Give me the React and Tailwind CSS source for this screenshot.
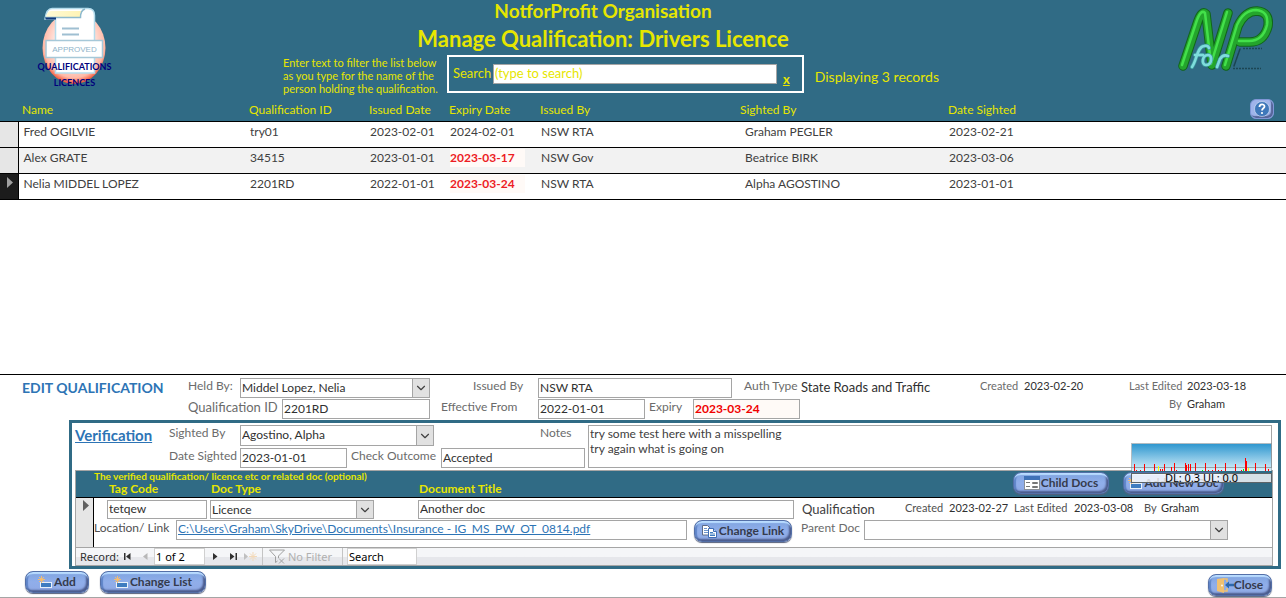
import { useState } from 'react'
import clsx from 'clsx'
import { ChevronDown } from 'lucide-react'

const records = [
  { id: 1, name: 'Fred OGILVIE', qualId: 'try01', issued: '2023-02-01', expiry: '2024-02-01', expired: false, issuedBy: 'NSW RTA', sightedBy: 'Graham PEGLER', sighted: '2023-02-21' },
  { id: 2, name: 'Alex GRATE', qualId: '34515', issued: '2023-01-01', expiry: '2023-03-17', expired: true, issuedBy: 'NSW Gov', sightedBy: 'Beatrice BIRK', sighted: '2023-03-06' },
  { id: 3, name: 'Nelia MIDDEL LOPEZ', qualId: '2201RD', issued: '2022-01-01', expiry: '2023-03-24', expired: true, issuedBy: 'NSW RTA', sightedBy: 'Alpha AGOSTINO', sighted: '2023-01-01' },
]

// x, height, colour of each traffic spike
const spikes = [
  [3, 7, 'red'], [5, 1, 'red'], [9, 1, 'red'], [13, 7, 'red'], [23, 7, 'red'], [27, 5, 'yellow'], [29, 2, 'red'], [31, 2, 'red'],
  [33, 7, 'red'], [40, 4, 'red'], [43, 8, 'red'], [45, 1, 'red'], [54, 8, 'red'], [55, 6, 'red'], [57, 7, 'red'], [59, 7, 'red'],
  [64, 8, 'red'], [71, 1, 'lime'], [74, 8, 'red'], [77, 1, 'red'], [81, 1, 'red'], [84, 7, 'red'], [87, 1, 'red'], [90, 1, 'red'],
  [94, 8, 'red'], [104, 7, 'red'], [110, 1, 'red'], [112, 2, 'lime'], [114, 13, 'red'], [115, 10, 'red'], [117, 3, 'yellow'],
  [124, 8, 'red'], [134, 7, 'red'], [137, 2, 'red'],
]

const inputClass = 'h-5 min-w-0 border border-[#a5a5a5] bg-white px-px pb-[2px] text-[#303030] outline-none'

function Field({ id, label, labelClass, className, value, type = 'text' }) {
  return (
    <>
      <label htmlFor={id} className={clsx('shrink-0 leading-4 whitespace-nowrap text-[#6b6b6b]', labelClass)}>{label}</label>
      <input id={id} type={type} defaultValue={value} className={clsx(inputClass, className)} />
    </>
  )
}

function Combo({ id, value, className, label }) {
  return (
    <div className={clsx('relative min-w-0', className)}>
      <select
        id={id}
        aria-label={label}
        defaultValue={value}
        className="block h-full w-full appearance-none border border-[#a5a5a5] bg-white pr-5 pb-[2px] pl-px text-[#303030] outline-none"
      >
        <option value={value}>{value}</option>
      </select>
      <span className="pointer-events-none absolute inset-y-0 right-0 flex w-[18px] items-center justify-center border border-[#a5a5a5] bg-[#e1e1e1]">
        <ChevronDown size={14} strokeWidth={2} className="shrink-0 text-[#404040]" />
      </span>
    </div>
  )
}

function GlossyButton({ children, className }) {
  return (
    <button
      type="button"
      className={clsx(
        'flex h-[22px] shrink-0 items-center justify-center rounded-lg border border-[#5470a8] bg-linear-to-b from-[#7fa4e0] via-[#90aeea] to-[#8fa9e4] font-bold whitespace-nowrap text-[#353b4d] shadow-[inset_0_3px_1px_-1px_#b9dcff,inset_-2px_-2px_2px_#4a5a8c,inset_2px_0_1px_#5f84c8,0_1px_1px_#56607c]',
        className
      )}
    >
      {children}
    </button>
  )
}

function NewIcon() {
  return (
    <svg width="14" height="13" viewBox="0 0 14 13" className="shrink-0">
      <rect x="2.500" y="6.500" width="11" height="5" fill="#3f7cc0" stroke="#e8f0fa" />
      <path d="M3.500 0v7M0 3.500h7M1 1l5 5M6 1L1 6" stroke="#f2bc72" strokeWidth="1" />
    </svg>
  )
}

function FormIcon() {
  return (
    <svg width="16" height="14" viewBox="0 0 16 14" className="shrink-0">
      <rect x="0.5" y="0.5" width="15" height="13" fill="#fff" stroke="#8a8f98" />
      <path d="M0 0h16v4H0z" fill="#3f72b8" />
      <path d="M2 6.500h4M2 10.500h4" stroke="#777" />
      <path d="M8.500 6.500h5v1h-5zM8.500 10.500h5v1h-5z" fill="none" stroke="#777" />
    </svg>
  )
}

function CopyIcon() {
  return (
    <svg width="15" height="13" viewBox="0 0 15 13" className="shrink-0">
      <path d="M0.500 0.500h5l3 3v6.500h-8z" fill="#fff" stroke="#5c6b88" />
      <path d="M2 3.500h3M2 5.500h5M2 7.500h5" stroke="#6f95cc" />
      <path d="M6.500 3.500h5l3 3v6h-8z" fill="#fff" stroke="#3f6db4" />
      <path d="M11.500 3.500v3h3" fill="#bcd2f0" stroke="#3f6db4" />
      <path d="M8 7.500h3M8 9h5M8 10.500h5" stroke="#3f7cc0" />
    </svg>
  )
}

function DoorIcon() {
  return (
    <svg width="17" height="15" viewBox="0 0 17 15" className="shrink-0">
      <path d="M0 1l7-1v15l-7-2z" fill="#f0c070" />
      <path d="M7 1h3v3M10 10v3H7" fill="none" stroke="#f0c070" strokeWidth="1.500" />
      <circle cx="5" cy="7.500" r="0.900" fill="#fff" />
      <path d="M8 7l4-3.500v2.300h5v2.400h-5v2.300z" fill="#2d68ad" />
    </svg>
  )
}

function ApprovedLogo() {
  return (
    <svg width="78" height="84" viewBox="35 5 78 84" role="img" aria-label="Qualifications Licences">
      <defs>
        <radialGradient id="disc" cx="50%" cy="42%" r="58%">
          <stop offset="0.500" stopColor="#ffe9e4" />
          <stop offset="0.850" stopColor="#ffb9a6" />
          <stop offset="1" stopColor="#f04a2c" />
        </radialGradient>
        <linearGradient id="roll" x1="0" x2="1">
          <stop offset="0" stopColor="#fffbd6" />
          <stop offset="1" stopColor="#fff3b4" />
        </linearGradient>
      </defs>
      <ellipse cx="74" cy="48" rx="31.500" ry="36" fill="url(#disc)" />
      <path d="M45 19c1-7 3-10.500 7-10.500h36c5 0 6.500 3 6.500 7V73H55.500V19z" fill="#fff" stroke="#b4dcec" strokeWidth="1.500" />
      <path d="M46 17c1-5 3-6 6-6h30c-2 1-2 4-2 6z" fill="url(#roll)" />
      <path d="M45 17.500h35.500c0-4 1-7.500 4.500-8.500" fill="none" stroke="#8db9cc" strokeWidth="1.500" />
      <path d="M45 17.500h11v2H46z" fill="#123a7c" />
      <path d="M62 28.500h17M62 34.500h17" stroke="#9fbfd2" strokeWidth="1.800" />
      <rect x="46" y="40.500" width="56.500" height="17" fill="#fff" stroke="#a6c8d8" strokeWidth="1.500" />
      <text x="74.500" y="52" textAnchor="middle" fontFamily="Liberation Sans, sans-serif" fontSize="8" fill="#8fb4ca">APPROVED</text>
      <text x="74.500" y="70" textAnchor="middle" fontFamily="Lato, sans-serif" fontWeight="bold" fontSize="9" fill="#00007c">QUALIFICATIONS</text>
      <text x="74.500" y="86" textAnchor="middle" fontFamily="Lato, sans-serif" fontWeight="bold" fontSize="9" fill="#00007c">LICENCES</text>
    </svg>
  )
}

// Tube lettering: dark outline, mid tone, thin highlight on top
function NfpLogo() {
  const letters = 'M1183 66L1198 21Q1202 10 1206 14L1212 65L1228 13M1226 66L1238 26Q1245 11 1257 11Q1270 12 1268 26Q1264 42 1250 42L1240 42'
  const word = 'M1192 67C1197 60 1197 47 1204 46Q1208 45 1209 48M1195 55H1203M1208 55C1202 55 1201 65 1206 65C1212 65 1213 55 1208 55M1217 67L1220 59Q1223 54 1228 56'
  return (
    <svg width="98" height="68" viewBox="1177 4 98 68" role="img" aria-label="NforP" fill="none" strokeLinecap="round" strokeLinejoin="round">
      <path d={letters} stroke="#11651a" strokeWidth="9.500" />
      <path d={letters} stroke="#24a52c" strokeWidth="7.500" />
      <path d={letters} stroke="#43e04a" strokeWidth="2.500" transform="translate(-1 -1)" />
      <path d="M1240 49L1234 66" stroke="#1b4450" strokeWidth="1.500" strokeDasharray="3 1" />
      <path d="M1243 48.500H1262M1233 68.500H1261" stroke="#1c4654" strokeWidth="1.500" strokeDasharray="2 1" strokeLinecap="butt" />
      <path d={word} stroke="#3b9a9c" strokeWidth="4" />
      <path d={word} stroke="#7fdcdc" strokeWidth="2.600" />
    </svg>
  )
}

function TrafficMeter() {
  return (
    <div className="absolute top-[20px] right-[6px] w-[141px]">
      <div className="border border-b-0 border-[#7d8f99]/60">
        <svg width="139" height="27" viewBox="1 0 139 27" className="block">
          <defs>
            <linearGradient id="sky" x1="0" y1="0" x2="0" y2="1">
              <stop offset="0" stopColor="#2f97cf" />
              <stop offset="1" stopColor="#d8f1fb" />
            </linearGradient>
          </defs>
          <rect width="141" height="27" fill="url(#sky)" />
          <path d="M0 23.500H141" stroke="#9aa5aa" />
          {spikes.map(([x, h, color]) => (
            <rect key={x} x={x} y={27 - h} width="1" height={h} fill={color} />
          ))}
        </svg>
      </div>
      <div className="mt-[2px] h-[10px] border border-[#5c6468] bg-white/80 text-center font-['Noto_Sans'] text-[11px] leading-[8px] text-black">
        DL: 0.3 UL: 0.0
      </div>
    </div>
  )
}

function PageHeader() {
  const [search, setSearch] = useState('')
  return (
    <header className="flex h-[97px] items-start bg-[#306b85] text-[#e6e600]">
      <div className="w-[283px] shrink-0 pt-[5px] pl-[35px]">
        <ApprovedLogo />
      </div>
      <div className="w-[656px] shrink-0">
        <div className="pr-4 text-center font-bold">
          <p className="text-[19px] leading-[21px]">NotforProfit Organisation</p>
          <h1 className="pt-1 text-[22px] leading-[28px]">Manage Qualification: Drivers Licence</h1>
        </div>
        <div className="flex pt-px text-[13px]">
          <p className="w-[164px] pt-[2px] text-[11px] leading-[13px] whitespace-nowrap">
            Enter text to filter the list below<br />
            as you type for the name of the<br />
            person holding the qualification.
          </p>
          <div className="mt-px flex h-[38px] w-[357px] items-start border-2 border-white pt-[7px] pl-1">
            <label htmlFor="search" className="w-10 pt-px leading-4">Search</label>
            <input
              id="search"
              type="text"
              placeholder="(type to search)"
              value={search}
              onChange={(e) => setSearch(e.target.value)}
              className="h-5 w-[284px] border border-[#a5a5a5] bg-white px-px pb-[2px] text-[#303030] outline-none placeholder:text-[#e6e600]"
            />
            <button type="button" aria-label="x" onClick={() => setSearch('')} className="mt-[7px] ml-[6px] leading-4 font-bold underline">x</button>
          </div>
          <p className="pt-[15px] pl-[11px] text-[14px] leading-4 whitespace-nowrap">Displaying 3 records</p>
        </div>
      </div>
      <div className="ml-auto pt-1 pr-[11px]">
        <NfpLogo />
      </div>
    </header>
  )
}

function RecordsTable() {
  return (
    <table className="w-full table-fixed border-collapse text-left">
      <colgroup>
        <col className="w-[18px]" />
        <col className="w-[227px]" />
        <col className="w-[120px]" />
        <col className="w-[80px]" />
        <col className="w-[91px]" />
        <col className="w-[204px]" />
        <col className="w-[204px]" />
        <col />
      </colgroup>
      <thead className="bg-[#306b85] text-[#e6e600]">
        <tr className="h-6 whitespace-nowrap [&>th]:p-0 [&>th]:pt-[2px] [&>th]:pl-1 [&>th]:font-normal">
          <th></th>
          <th>Name</th>
          <th>Qualification ID</th>
          <th>Issued Date</th>
          <th>Expiry Date</th>
          <th>Issued By</th>
          <th className="pl-0!">Sighted By</th>
          <th className="pt-0!">
            <div className="flex items-center justify-between pr-3">
              <span className="pt-[2px]">Date Sighted</span>
              <button type="button" aria-label="Help" className="flex h-5 w-6 items-center justify-center rounded-md border border-[#7f96d6] bg-[#9fb4ea] shadow-[inset_-2px_-2px_1px_#56659a]">
                <svg width="16" height="16" viewBox="0 0 16 16">
                  <circle cx="8" cy="8" r="7.500" fill="#3f78ba" stroke="#dfe9f8" strokeWidth="0.600" />
                  <path d="M5.500 6c0-3.500 5-3.300 5-.6C10.500 7.200 8 7.300 8 9.500" fill="none" stroke="#fff" strokeWidth="1.800" />
                  <circle cx="8" cy="12" r="1.100" fill="#fff" />
                </svg>
              </button>
            </div>
          </th>
        </tr>
      </thead>
      <tbody>
        {records.map((r, i) => {
          const current = r.id === 3
          return (
            <tr
              key={r.id}
              className={clsx('h-[26px] border-y border-black whitespace-nowrap text-[#404040] [&>td]:p-0 [&>td]:pb-1 [&>td]:pl-[5px]', i % 2 ? 'bg-[#f2f2f2]' : 'bg-white')}
            >
              <td className={clsx('border-r border-black align-top', current ? 'bg-[#1c1c1c]' : 'bg-[#e6e6e6]')}>
                {current && (
                  <svg width="7" height="11" viewBox="0 0 7 11" className="mt-[3px] ml-[2px]">
                    <path d="M0 0l6 5.500L0 11z" fill="#a0a0a0" />
                  </svg>
                )}
              </td>
              <td>{r.name}</td>
              <td>{r.qualId}</td>
              <td>{r.issued}</td>
              <td>
                {r.expired ? (
                  <span className="block w-[75px] bg-[#fffaf7] font-bold text-[#ed1c24]">{r.expiry}</span>
                ) : (
                  r.expiry
                )}
              </td>
              <td>{r.issuedBy}</td>
              <td>{r.sightedBy}</td>
              <td>{r.sighted}</td>
            </tr>
          )
        })}
      </tbody>
    </table>
  )
}

function EditSection() {
  return (
    <section className="flex border-t border-black pt-[3px] pl-[22px]">
      <h2 className="w-[166px] shrink-0 text-[14px] leading-5 font-bold whitespace-nowrap text-[#2d74b5]">EDIT QUALIFICATION</h2>
      <div className="space-y-px">
        <div className="flex">
          <label htmlFor="heldBy" className="w-[52px] leading-4 text-[#6b6b6b]">Held By:</label>
          <Combo id="heldBy" value="Middel Lopez, Nelia" className="h-5 w-[190px]" />
          <Field id="issuedBy" label="Issued By" value="NSW RTA" labelClass="w-[108px] pl-[43px]" className="w-[194px]" />
          <span className="w-[69px] pl-3 leading-4 whitespace-nowrap text-[#6b6b6b]">Auth Type</span>
          <span className="text-[13px] whitespace-nowrap text-[#303030]">State Roads and Traffic</span>
        </div>
        <div className="flex">
          <Field id="qualId" label="Qualification ID" value="2201RD" labelClass="w-[94px] text-[13px]" className="w-[148px]" />
          <Field id="effective" label="Effective From" value="2022-01-01" labelClass="w-[108px] pl-[11px]" className="w-[107px]" />
          <Field id="expiry" label="Expiry" value="2023-03-24" labelClass="w-[48px] pl-1" className="w-[107px] bg-[#fffaf7]! font-bold text-[#f00000]!" />
        </div>
      </div>
      <dl className="ml-auto grid auto-rows-[18px] grid-cols-[44px_105px_58px_99px] text-[11px] leading-4 text-[#303030] [&>dt]:text-[#6b6b6b]">
        <dt>Created</dt>
        <dd>2023-02-20</dd>
        <dt>Last Edited</dt>
        <dd>2023-03-18</dd>
        <dt className="col-start-3 pl-10">By</dt>
        <dd>Graham</dd>
      </dl>
    </section>
  )
}

function RecordNav() {
  return (
    <div className="flex h-[19px] items-stretch border-y border-[#a5a5a5] bg-linear-to-b from-[#f5f6f8] from-50% to-[#e6e7eb] to-50% font-['Noto_Sans'] text-[11px] leading-[17px] text-[#303030]">
      <span className="w-[42px] pl-1">Record:</span>
      <button type="button" aria-label="First record" className="flex w-[18px] items-center justify-center">
        <svg width="7" height="7" viewBox="0 0 7 7"><path d="M0 0h1.500v7H0zM6.500 0v7L2 3.500z" fill="#303030" /></svg>
      </button>
      <button type="button" aria-label="Previous record" className="flex w-[18px] items-center justify-center">
        <svg width="5" height="7" viewBox="0 0 5 7"><path d="M4.500 0v7L0 3.500z" fill="#b8b8b8" /></svg>
      </button>
      <input aria-label="Current record" defaultValue="1 of 2" className="w-[51px] border border-[#d0d0d0] bg-white px-px text-black outline-none" />
      <button type="button" aria-label="Next record" className="flex w-5 items-center justify-center">
        <svg width="5" height="7" viewBox="0 0 5 7"><path d="M0 0v7l4.500-3.500z" fill="#303030" /></svg>
      </button>
      <button type="button" aria-label="Last record" className="flex w-4 items-center justify-center">
        <svg width="7" height="7" viewBox="0 0 7 7"><path d="M0 0v7l4.500-3.500zM5.500 0H7v7H5.500z" fill="#303030" /></svg>
      </button>
      <button type="button" aria-label="New record" className="flex w-[18px] items-center justify-center">
        <svg width="13" height="9" viewBox="0 0 13 9">
          <path d="M0 1v7l4-3.500z" fill="#c0c0c0" />
          <path d="M9 0v9M5 4.500h8M6 1.500l6 6M12 1.500l-6 6" stroke="#f3d9b8" />
        </svg>
      </button>
      <button type="button" className="ml-[3px] flex w-[81px] items-center border-x border-[#c4c4c4] pl-[6px] text-[#b0b0b0]">
        <svg width="17" height="15" viewBox="0 0 17 15" fill="none" stroke="#a0a0a0">
          <path d="M0.500 1h15L9.500 7v2M0.500 1l6 6.500v6l2-1.500M10 9.500l5 5M15 9.500l-5 5" />
        </svg>
        <span className="pl-[2px] whitespace-nowrap">No Filter</span>
      </button>
      <input aria-label="Search records" defaultValue="Search" className="ml-1 w-[70px] border border-[#d0d0d0] bg-white px-px text-black outline-none" />
    </div>
  )
}

function Documents() {
  return (
    <div className="mt-[2px] mr-[5px] ml-[3px] border-x border-t border-[#a5a5a5]">
      <div className="flex h-[27px] justify-between border-b border-black bg-[#306b85] font-bold text-[#e6e600]">
        <div className="pl-[18px]">
          <p className="text-[10px] leading-[11px] whitespace-nowrap">The verified qualification/ licence etc or related doc (optional)</p>
          <div className="flex pl-[15px] leading-[13px]">
            <span className="w-[102px]">Tag Code</span>
            <span className="w-[208px]">Doc Type</span>
            <span>Document Title</span>
          </div>
        </div>
        <div className="flex gap-[14px] pt-px pr-12">
          <GlossyButton className="w-24 gap-px"><FormIcon />Child Docs</GlossyButton>
          <GlossyButton className="w-[101px] gap-[2px]"><NewIcon />Add New Doc</GlossyButton>
        </div>
      </div>
      <div className="flex h-[49px]">
        <div className="w-[18px] shrink-0 border-r border-black bg-[#e6e6e6] pt-[2px] pl-[7px]">
          <svg width="7" height="11" viewBox="0 0 7 11"><path d="M0 0l6 5.500L0 11z" fill="#606060" /></svg>
        </div>
        <div className="min-w-0 flex-1 space-y-px pt-[2px]">
          <div className="flex pl-[13px]">
            <input aria-label="Tag Code" defaultValue="tetqew" className={clsx(inputClass, 'h-[19px]! w-[100px]')} />
            <Combo label="Doc Type" value="Licence" className="ml-[3px] h-[19px] w-[164px]" />
            <input aria-label="Document Title" defaultValue="Another doc" className={clsx(inputClass, 'ml-11 h-[19px]! w-[376px]')} />
            <span className="w-[111px] pl-2 text-[13px] text-[#404040]">Qualification</span>
            <dl className="grid grid-cols-[44px_65px_60px_70px_17px_60px] text-[11px] leading-4 text-[#303030] [&>dt]:text-[#505050]">
              <dt>Created</dt>
              <dd>2023-02-27</dd>
              <dt>Last Edited</dt>
              <dd>2023-03-08</dd>
              <dt>By</dt>
              <dd>Graham</dd>
            </dl>
          </div>
          <div className="flex">
            <span className="w-[82px] leading-4 whitespace-nowrap text-[#505050]">Location/ Link</span>
            <div className="h-5 w-[511px] overflow-hidden border border-[#a5a5a5] px-px leading-4">
              <a href="#document" className="whitespace-nowrap text-[#2d74b5] underline">
                C:\Users\Graham\SkyDrive\Documents\Insurance - IG_MS_PW_OT_0814.pdf
              </a>
            </div>
            <GlossyButton className="ml-[7px] w-[98px] gap-[2px]"><CopyIcon />Change Link</GlossyButton>
            <label htmlFor="parentDoc" className="w-[72px] pl-[9px] leading-4 whitespace-nowrap text-[#6b6b6b]">Parent Doc</label>
            <Combo id="parentDoc" value="" className="h-5 w-[364px]" />
          </div>
        </div>
      </div>
      <RecordNav />
    </div>
  )
}

function Verification() {
  return (
    <section className="relative mt-px mr-[5px] ml-[69px] border-[3px] border-[#306b85] pt-[2px]">
      <div className="flex pl-[3px]">
        <h3 className="w-[94px] shrink-0 text-[15px] leading-5 font-bold">
          <a href="#verification" className="text-[#2d74b5] underline">Verification</a>
        </h3>
        <div className="w-[419px] shrink-0 space-y-[2px]">
          <div className="flex">
            <label htmlFor="sightedBy" className="w-[71px] leading-4 text-[#6b6b6b]">Sighted By</label>
            <Combo id="sightedBy" value="Agostino, Alpha" className="h-[21px] w-[194px]" />
            <label htmlFor="notes" className="pl-[106px] leading-4 text-[#6b6b6b]">Notes</label>
          </div>
          <div className="flex">
            <Field id="dateSighted" label="Date Sighted" value="2023-01-01" labelClass="w-[71px]" className="w-[107px]" />
            <Field id="outcome" label="Check Outcome" value="Accepted" labelClass="w-[94px] pl-1" className="w-[144px]" />
          </div>
        </div>
        <textarea
          id="notes"
          defaultValue={'try some test here with a misspelling\ntry again what is going on'}
          className="mr-[6px] h-[43px] min-w-0 flex-1 resize-none overflow-hidden border border-[#a5a5a5] bg-white px-px leading-[15px] text-[#404040] outline-none"
        />
      </div>
      <Documents />
      <TrafficMeter />
    </section>
  )
}

export default function App() {
  return (
    <div className="flex min-h-screen flex-col border-b border-[#a5a5a5] bg-white font-['Lato',sans-serif] text-[12px] leading-[18px]">
      <PageHeader />
      <main className="flex flex-1 flex-col">
        <div className="flex-1">
          <RecordsTable />
        </div>
        <EditSection />
        <Verification />
      </main>
      <footer className="flex items-start pt-[2px] pr-[14px] pb-1 pl-[25px]">
        <GlossyButton className="w-16 gap-[2px]"><NewIcon />Add</GlossyButton>
        <GlossyButton className="ml-[11px] w-[106px] gap-[2px]"><NewIcon />Change List</GlossyButton>
        <GlossyButton className="mt-[3px] -mb-1 ml-auto w-16"><DoorIcon />Close</GlossyButton>
      </footer>
    </div>
  )
}
